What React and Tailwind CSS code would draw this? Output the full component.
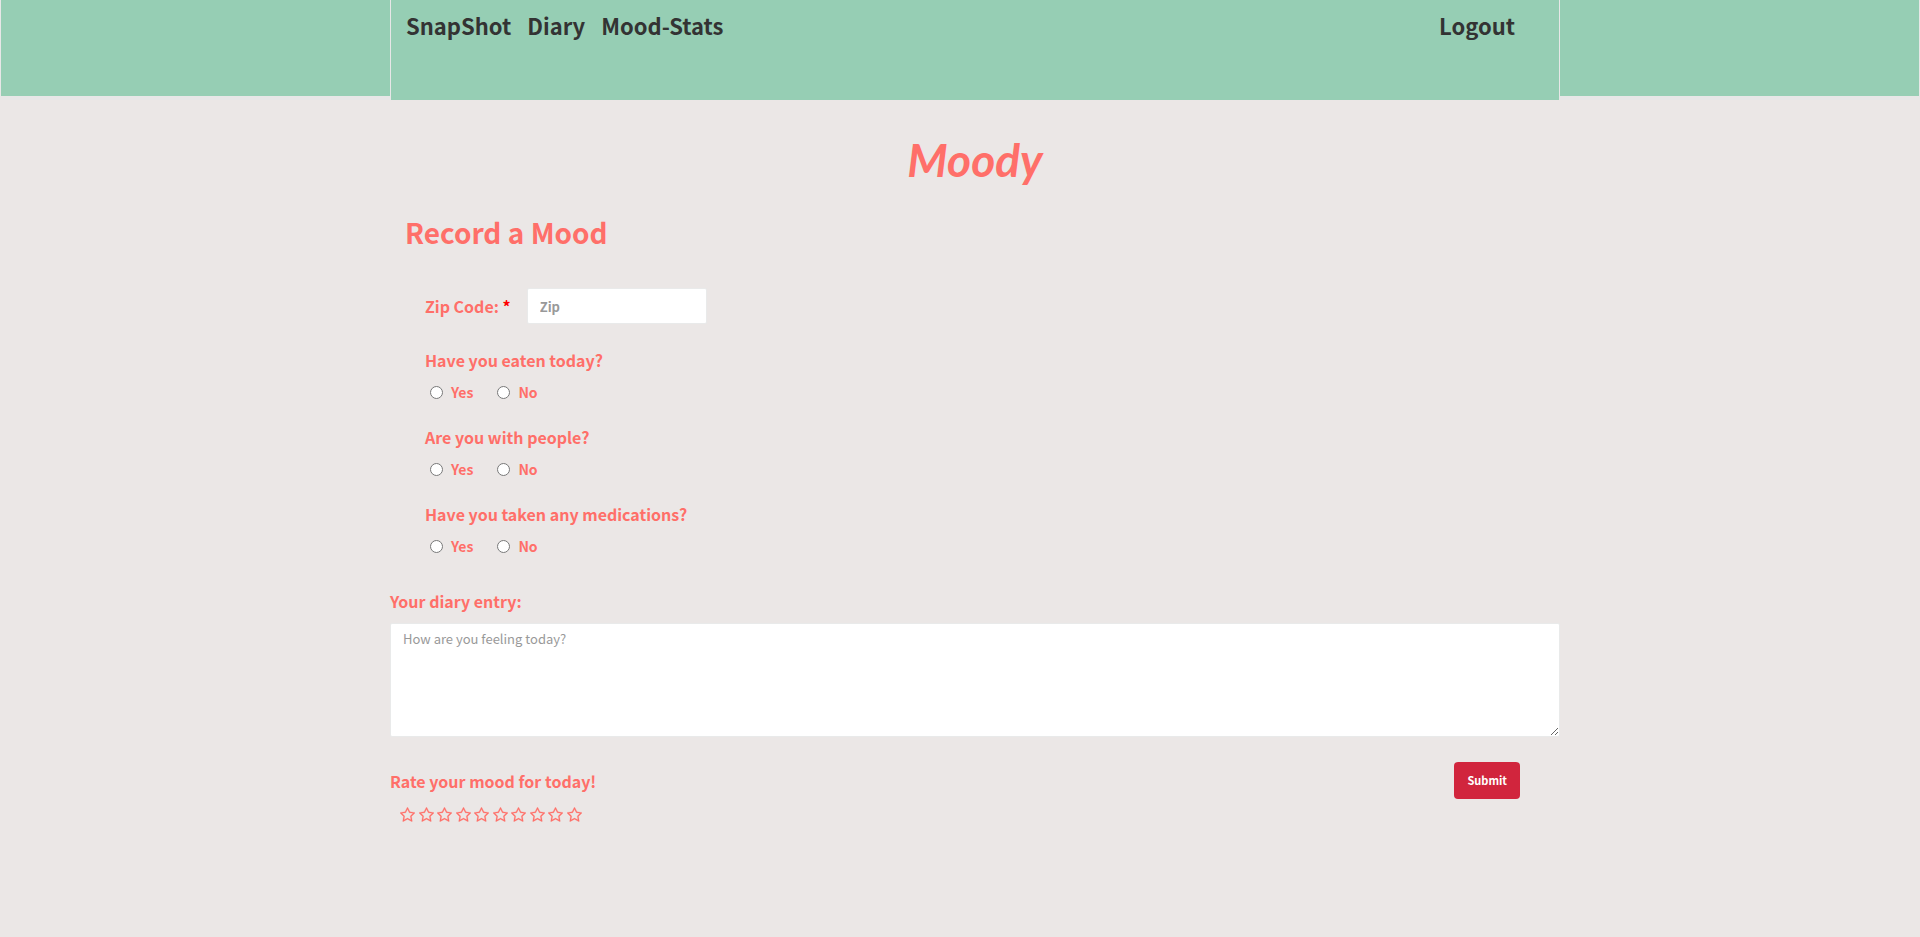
const FIELD = "rounded-xs border border-[#e9eaea] bg-white px-3 text-[#555] placeholder:text-[#999] outline-none";

const QUESTIONS = [
  { name: "eaten", text: "Have you eaten today?" },
  { name: "people", text: "Are you with people?" },
  { name: "medications", text: "Have you taken any medications?" },
];

const STARS = [1, 2, 3, 4, 5, 6, 7, 8, 9, 10];

function Choice({ name, value }) {
  return (
    <label className="flex items-center gap-2 text-[14px] leading-5">
      <input type="radio" name={name} value={value} className="size-[13px]" />
      {value}
    </label>
  );
}

function Question({ name, text }) {
  return (
    <fieldset className="mb-[22px]">
      <legend className="text-[16px] leading-[26px]">{text}</legend>
      <div className="mt-[9px] flex gap-6 pl-[5px]">
        <Choice name={name} value="Yes" />
        <Choice name={name} value="No" />
      </div>
    </fieldset>
  );
}

function Star({ value }) {
  return (
    <button type="button" aria-label={`${value} of 10`} className="flex">
      <svg viewBox="0 0 1664 1664" className="size-[15px]" fill="currentColor" stroke="currentColor" strokeWidth="24" aria-hidden="true">
        <path d="M1137 1004l306-297-422-62-189-382-189 382-422 62 306 297-73 421 378-199 377 199zm527-357q0 22-26 48l-363 354 86 500q1 7 1 20 0 50-41 50-19 0-40-12l-449-236-449 236q-22 12-40 12-21 0-31.500-14.500t-10.500-35.500q0-6 2-20l86-500-364-354q-25-27-25-48 0-37 56-46l502-73 225-455q19-41 49-41t49 41l225 455 502 73q56 9 56 46z" />
      </svg>
    </button>
  );
}

export default function App() {
  return (
    <div className="min-h-screen bg-[#ebe7e6] font-['Noto_Sans_CJK_JP',sans-serif] font-bold text-[#ff6f69]">
      <header className="border-x border-[#e7e7e7] bg-[linear-gradient(#96ceb4_96px,#e7e7e7_96px)] pl-[30px]">
        <nav className="mx-auto flex h-[100px] max-w-[1170px] items-start justify-between border-x border-[#e7e7e7] bg-[#96ceb4] pt-[7px] pr-11 pl-[15px] text-[22px] leading-9 text-[#333]">
          <div className="flex gap-4">
            <a href="#snapshot">SnapShot</a>
            <a href="#diary">Diary</a>
            <a href="#mood-stats">Mood-Stats</a>
          </div>
          <a href="#logout">Logout</a>
        </nav>
      </header>

      <main className="pl-[30px]">
        <div className="mx-auto max-w-[1170px]">
          <h1 className="pt-7 text-center font-['Lato',cursive] text-[46px] leading-[64px] font-bold italic">Moody</h1>
          <h2 className="mt-5 pl-[15px] text-[28px] leading-10">Record a Mood</h2>

          <form>
            <div className="pt-9 pl-[35px]">
              <div className="mb-[23px] flex items-center">
                <label htmlFor="zip" className="text-[16px] leading-6">
                  Zip Code: <span className="text-[#f00]">*</span>
                </label>
                <input id="zip" type="text" placeholder="Zip" className={`ml-4 h-9 w-[180px] text-[13px] ${FIELD}`} />
              </div>
              {QUESTIONS.map((q) => (
                <Question key={q.name} {...q} />
              ))}
            </div>

            <label htmlFor="entry" className="block pt-[11px] text-[16px] leading-6">Your diary entry:</label>
            <textarea id="entry" placeholder="How are you feeling today?" className={`mt-[10px] block h-[114px] w-full resize-y py-[5px] text-[13px] leading-5 font-normal ${FIELD}`} />

            <div className="mt-[25px] flex items-start justify-between pr-10">
              <div className="pt-[7px]">
                <div className="text-[16px] leading-6">Rate your mood for today!</div>
                <div className="mt-[14px] ml-[10px] flex w-[182px] justify-between">
                  {STARS.map((n) => (
                    <Star key={n} value={n} />
                  ))}
                </div>
              </div>
              <button type="submit" className="rounded-sm bg-[#d1253d] px-[13px] py-[10px] text-[11px] leading-[17px] text-white">Submit</button>
            </div>
          </form>
        </div>
      </main>
    </div>
  );
}
